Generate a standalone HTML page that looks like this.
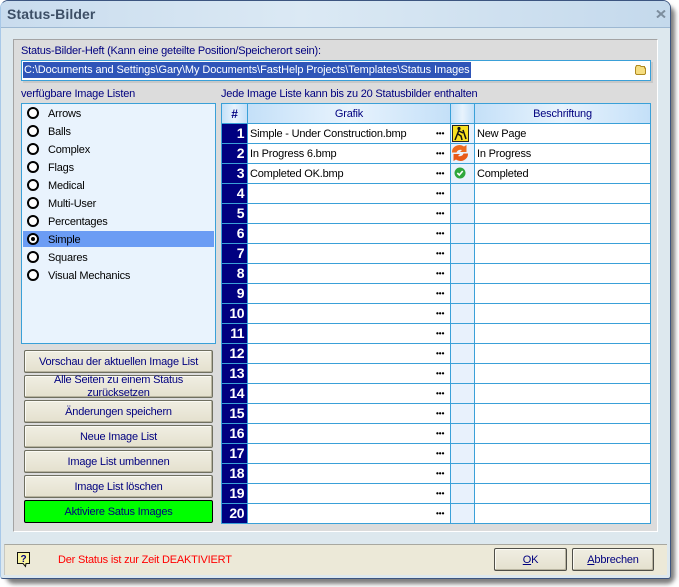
<!DOCTYPE html>
<html>
<head>
<meta charset="utf-8">
<style>
html,body{margin:0;padding:0;background:#fff;}
#root{position:relative;width:679px;height:587px;overflow:hidden;background:#fff;font-family:"Liberation Sans",sans-serif;font-size:11px;letter-spacing:-.2px;color:#000;}
#root div{position:absolute;box-sizing:border-box;white-space:nowrap;}
.lbl{color:#00007f;line-height:14px;}
.btn{left:24px;width:189px;height:23px;background:linear-gradient(#f0eee2,#e4e0ce);border:1px solid #6f6f60;border-radius:2px;box-shadow:inset -1px -1px 0 #b8b4a0,inset 1px 1px 0 #fbfaf4;color:#00007f;text-align:center;line-height:23px;}
.rl{left:48px;color:#000;line-height:14px;}
.rad{left:27px;width:12px;height:12px;border:2px solid #000;border-radius:50%;background:#fff;}
.row{left:222px;width:428px;height:20px;border-bottom:1px solid #3aa0d8;}
.n{left:0;top:0;width:25px;height:19px;background:#000080;color:#fff;font-weight:bold;font-size:14px;letter-spacing:-.5px;line-height:18px;text-align:right;padding-right:3px;}
.ic{left:228px;top:0;width:24px;height:19px;background:#e8f1fc;}
.d{left:214px;top:5px;color:#000;font-size:8px;font-weight:bold;line-height:9px;letter-spacing:0;}
.t1{left:28px;top:3px;line-height:14px;}
.t2{left:255px;top:3px;line-height:14px;}
.v{top:103px;width:1px;height:421px;background:#3aa0d8;}
.hd{top:104px;height:19px;background:linear-gradient(90deg,#c4e0f8,#e8f3fd 50%,#c4e0f8);color:#00007f;text-align:center;line-height:21px;}
</style>
</head>
<body>
<div id="root">
  <!-- shadow -->
  <div style="left:6px;top:6px;width:669px;height:578px;background:#7e7e7e;border-radius:8px;filter:blur(2px);"></div>
  <!-- window -->
  <div style="left:0;top:0;width:671px;height:579px;background:#dde8ee;border:1px solid;border-color:#3c5580 #3c5580 #3c5580 #a8c8e8;border-radius:8px 8px 3px 3px;"></div>
  <div style="left:1px;top:1px;width:669px;height:27px;border-radius:7px 7px 0 0;background:linear-gradient(90deg,#c9dcee,#dbe9f4 45%,#c4d9ec);border-bottom:1px solid #9db8d2;"></div>
  <div style="left:7px;top:6px;font-size:14px;font-weight:bold;color:#3d4f66;line-height:17px;letter-spacing:.1px;">Status-Bilder</div>
  <svg style="position:absolute;left:656px;top:10px" width="10" height="8" viewBox="0 0 10 8"><path d="M1 .5 L9 7.5 M9 .5 L1 7.5" stroke="#7d8e9e" stroke-width="2" fill="none"/></svg>

  <!-- main panel -->
  <div style="left:13px;top:39px;width:645px;height:493px;background:#dcdcdc;border:1px solid;border-color:#a4a4a4 #fff #fff #a4a4a4;"></div>

  <div class="lbl" style="left:21px;top:44px;">Status-Bilder-Heft (Kann eine geteilte Position/Speicherort sein):</div>
  <div style="left:21px;top:60px;width:630px;height:21px;background:#fff;border:1px solid #3aa0d8;box-shadow:2px 2px 0 #c8c8c8;"></div>
  <div style="left:23px;top:62px;width:448px;height:16px;background:#2f55b8;color:#fff;line-height:16px;padding-left:1px;letter-spacing:-.095px;">C:\Documents and Settings\Gary\My Documents\FastHelp Projects\Templates\Status Images</div>
  <svg style="position:absolute;left:634px;top:64px" width="13" height="12" viewBox="0 0 13 12"><path d="M1.5 3.5 L2.5 1.5 H6 L7 2.5 H10.5 V4 H11.5 V9.5 L10.5 10.5 H2.5 L1.5 9.5 Z" fill="#f6dd80" stroke="#b08a20"/></svg>

  <div class="lbl" style="left:21px;top:87px;">verfügbare Image Listen</div>
  <div class="lbl" style="left:221px;top:87px;">Jede Image Liste kann bis zu 20 Statusbilder enthalten</div>

  <!-- list -->
  <div style="left:21px;top:103px;width:195px;height:241px;background:#e9f3fd;border:1px solid #3aa0d8;"></div>
  <div style="left:23px;top:231px;width:191px;height:16px;background:#6b9cf4;"></div>
  <div class="rad" style="top:107px;"></div><div class="rl" style="top:107px;">Arrows</div>
  <div class="rad" style="top:125px;"></div><div class="rl" style="top:125px;">Balls</div>
  <div class="rad" style="top:143px;"></div><div class="rl" style="top:143px;">Complex</div>
  <div class="rad" style="top:161px;"></div><div class="rl" style="top:161px;">Flags</div>
  <div class="rad" style="top:179px;"></div><div class="rl" style="top:179px;">Medical</div>
  <div class="rad" style="top:197px;"></div><div class="rl" style="top:197px;">Multi-User</div>
  <div class="rad" style="top:215px;"></div><div class="rl" style="top:215px;">Percentages</div>
  <div class="rad" style="top:233px;"></div><div style="left:31px;top:237px;width:4px;height:4px;background:#000;border-radius:50%;"></div><div class="rl" style="top:233px;">Simple</div>
  <div class="rad" style="top:251px;"></div><div class="rl" style="top:251px;">Squares</div>
  <div class="rad" style="top:269px;"></div><div class="rl" style="top:269px;">Visual Mechanics</div>

  <!-- buttons -->
  <div class="btn" style="top:350px;">Vorschau der aktuellen Image List</div>
  <div class="btn" style="top:375px;line-height:13px;white-space:normal;padding-top:0;"><div style="left:0;right:0;top:-2px;">Alle Seiten zu einem Status<br>zurücksetzen</div></div>
  <div class="btn" style="top:400px;">Änderungen speichern</div>
  <div class="btn" style="top:425px;">Neue Image List</div>
  <div class="btn" style="top:450px;">Image List umbennen</div>
  <div class="btn" style="top:475px;">Image List löschen</div>
  <div class="btn" style="top:500px;background:#00ff00;border-color:#000;box-shadow:none;">Aktiviere Satus Images</div>

  <!-- grid -->
  <div style="left:221px;top:103px;width:430px;height:421px;background:#fff;border:1px solid #3aa0d8;"></div>
  <div class="hd" style="left:222px;width:25px;color:#000080;font-weight:bold;font-size:12px;">#</div>
  <div class="hd" style="left:248px;width:202px;">Grafik</div>
  <div class="hd" style="left:451px;width:23px;"></div>
  <div class="hd" style="left:475px;width:175px;">Beschriftung</div>
  <div style="left:222px;top:123px;width:428px;height:1px;background:#3aa0d8;"></div>

  <div class="row" style="top:124px;"><div class="n">1</div><div class="ic"></div><div class="t1">Simple - Under Construction.bmp</div><div class="d">•••</div><div class="t2">New Page</div></div>
  <div class="row" style="top:144px;"><div class="n">2</div><div class="ic"></div><div class="t1">In Progress 6.bmp</div><div class="d">•••</div><div class="t2">In Progress</div></div>
  <div class="row" style="top:164px;"><div class="n">3</div><div class="ic"></div><div class="t1">Completed OK.bmp</div><div class="d">•••</div><div class="t2">Completed</div></div>
  <div class="row" style="top:184px;"><div class="n">4</div><div class="ic"></div><div class="d">•••</div></div>
  <div class="row" style="top:204px;"><div class="n">5</div><div class="ic"></div><div class="d">•••</div></div>
  <div class="row" style="top:224px;"><div class="n">6</div><div class="ic"></div><div class="d">•••</div></div>
  <div class="row" style="top:244px;"><div class="n">7</div><div class="ic"></div><div class="d">•••</div></div>
  <div class="row" style="top:264px;"><div class="n">8</div><div class="ic"></div><div class="d">•••</div></div>
  <div class="row" style="top:284px;"><div class="n">9</div><div class="ic"></div><div class="d">•••</div></div>
  <div class="row" style="top:304px;"><div class="n">10</div><div class="ic"></div><div class="d">•••</div></div>
  <div class="row" style="top:324px;"><div class="n">11</div><div class="ic"></div><div class="d">•••</div></div>
  <div class="row" style="top:344px;"><div class="n">12</div><div class="ic"></div><div class="d">•••</div></div>
  <div class="row" style="top:364px;"><div class="n">13</div><div class="ic"></div><div class="d">•••</div></div>
  <div class="row" style="top:384px;"><div class="n">14</div><div class="ic"></div><div class="d">•••</div></div>
  <div class="row" style="top:404px;"><div class="n">15</div><div class="ic"></div><div class="d">•••</div></div>
  <div class="row" style="top:424px;"><div class="n">16</div><div class="ic"></div><div class="d">•••</div></div>
  <div class="row" style="top:444px;"><div class="n">17</div><div class="ic"></div><div class="d">•••</div></div>
  <div class="row" style="top:464px;"><div class="n">18</div><div class="ic"></div><div class="d">•••</div></div>
  <div class="row" style="top:484px;"><div class="n">19</div><div class="ic"></div><div class="d">•••</div></div>
  <div class="row" style="top:504px;border-bottom:0;"><div class="n">20</div><div class="ic"></div><div class="d">•••</div></div>

  <div class="v" style="left:247px;"></div>
  <div class="v" style="left:450px;"></div>
  <div class="v" style="left:474px;"></div>

  <!-- grid icons -->
  <svg style="position:absolute;left:452px;top:125px" width="17" height="17" viewBox="0 0 17 17"><rect x=".5" y=".5" width="16" height="16" fill="#f8e020" stroke="#222"/><circle cx="7" cy="3.5" r="1.6" fill="#111"/><path d="M7 5 L5 10 L3 15 M6 9 L9 11 L10 15 M7 6 L11 8 M11 5 L14 14" stroke="#111" stroke-width="1.5" fill="none"/></svg>
  <svg style="position:absolute;left:451px;top:144px" width="18" height="18" viewBox="0 0 18 18"><path d="M1 8.5 A7.5 7 0 0 1 13 2.5 L15.5 1 V8 H9 L11 6 A4 3.5 0 0 0 5.5 8.5 Z" fill="#ee6a1e"/><path d="M17 9.5 A7.5 7 0 0 1 5 15.5 L2.5 17 V10 H9 L7 12 A4 3.5 0 0 0 12.5 9.5 Z" fill="#e85a18"/></svg>
  <svg style="position:absolute;left:454px;top:167px" width="12" height="12" viewBox="0 0 12 12"><circle cx="6" cy="6" r="5.5" fill="#2fa83c"/><path d="M3.3 6 L5.3 8 L8.7 4" stroke="#fff" stroke-width="1.6" fill="none"/></svg>

  <!-- bottom bar -->
  <div style="left:4px;top:544px;width:663px;height:31px;background:#ece9d8;border-top:1px solid #a8a8a0;border-left:1px solid #c8c8c0;"></div>
  <svg style="position:absolute;left:16px;top:551px" width="15" height="17" viewBox="0 0 15 17"><path d="M1.5 1.5 H13.5 V12.5 H10 L9.5 15.5 L7 12.5 H1.5 Z" fill="#f8f4a0" stroke="#111"/><text x="7.5" y="11" font-size="10" font-weight="bold" font-family="Liberation Sans" fill="#00007f" text-anchor="middle">?</text></svg>
  <div style="left:58px;top:553px;color:#f00;line-height:14px;">Der Status ist zur Zeit DEAKTIVIERT</div>
  <div class="btn" style="left:494px;top:548px;width:73px;height:23px;border-color:#4f4f48;"><u>O</u>K</div>
  <div class="btn" style="left:572px;top:548px;width:82px;height:23px;border-color:#4f4f48;"><u>A</u>bbrechen</div>
</div>
</body>
</html>
